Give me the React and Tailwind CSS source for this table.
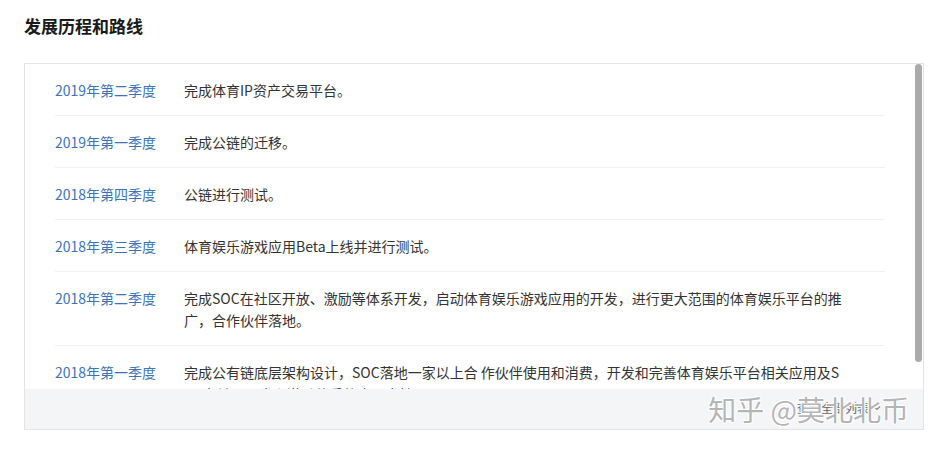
import React from "react";

const rows = [
  { date: "2019年第二季度", lines: ["完成体育IP资产交易平台。"] },
  { date: "2019年第一季度", lines: ["完成公链的迁移。"] },
  { date: "2018年第四季度", lines: ["公链进行测试。"] },
  { date: "2018年第三季度", lines: ["体育娱乐游戏应用Beta上线并进行测试。"] },
  {
    date: "2018年第二季度",
    lines: [
      "完成SOC在社区开放、激励等体系开发，启动体育娱乐游戏应用的开发，进行更大范围的体育娱乐平台的推",
      "广，合作伙伴落地。",
    ],
  },
  {
    date: "2018年第一季度",
    lines: [
      "完成公有链底层架构设计，SOC落地一家以上合 作伙伴使用和消费，开发和完善体育娱乐平台相关应用及S",
      "OC在社区开发和激励体系的应用支持。",
    ],
  },
];

const Row = ({ date, lines }) => {
  return (
    <div className="flex border-b border-[#f0f0f0] pt-[15px] pb-[14px] leading-[22px] text-[14px]">
      <div className="w-[129px] shrink-0 text-[#3b73b9]">{date}</div>
      <div className="text-[#333] whitespace-nowrap">
        {lines.map((l, i) => (
          <div key={i}>{l}</div>
        ))}
      </div>
    </div>
  );
};

const App = () => {
  return (
    <div
      className="w-[935px] h-[451px] bg-white overflow-hidden"
      style={{ fontFamily: '"Noto Sans CJK SC", "Noto Sans", sans-serif' }}
    >
      <div className="h-[63px] pl-[24px] pt-[13px]">
        <h2 className="text-[17px] font-bold text-[#1a1a1a] leading-[26px]">发展历程和路线</h2>
      </div>
      <div className="relative ml-[24px] w-[900px] h-[367px] border border-[#e3e3e3] overflow-hidden">
        <div className="pl-[30px] pr-[38px]">
          {rows.map((r) => (
            <Row key={r.date} {...r} />
          ))}
        </div>
        <div className="absolute right-[1px] top-0 w-[7px] h-[298px] rounded-[4px] bg-[#ababab]"></div>
        <div className="absolute left-0 right-0 bottom-0 h-[40px] bg-[#f4f5f7] flex items-center justify-end pr-[14px]">
          <div className="relative flex items-center">
            <div className="absolute right-[28px] top-[9px] text-[12px] leading-[16px] text-[#666] flex items-center gap-1">
              <span>查看全部列表</span>
              <svg width="8" height="8" viewBox="0 0 8 8" fill="none" stroke="#888" strokeWidth="1.2">
                <path d="M1 2.5 L4 5.5 L7 2.5" />
              </svg>
            </div>
            <div
              className="relative text-[28px] leading-[36px] text-[#b5b5b5] whitespace-nowrap"
              style={{ textShadow: "1px 1px 0 #fff, -1px -1px 0 #fff, 1px -1px 0 #fff, -1px 1px 0 #fff" }}
            >
              知乎 @莫北北币
            </div>
          </div>
        </div>
      </div>
    </div>
  );
};

export default App;
